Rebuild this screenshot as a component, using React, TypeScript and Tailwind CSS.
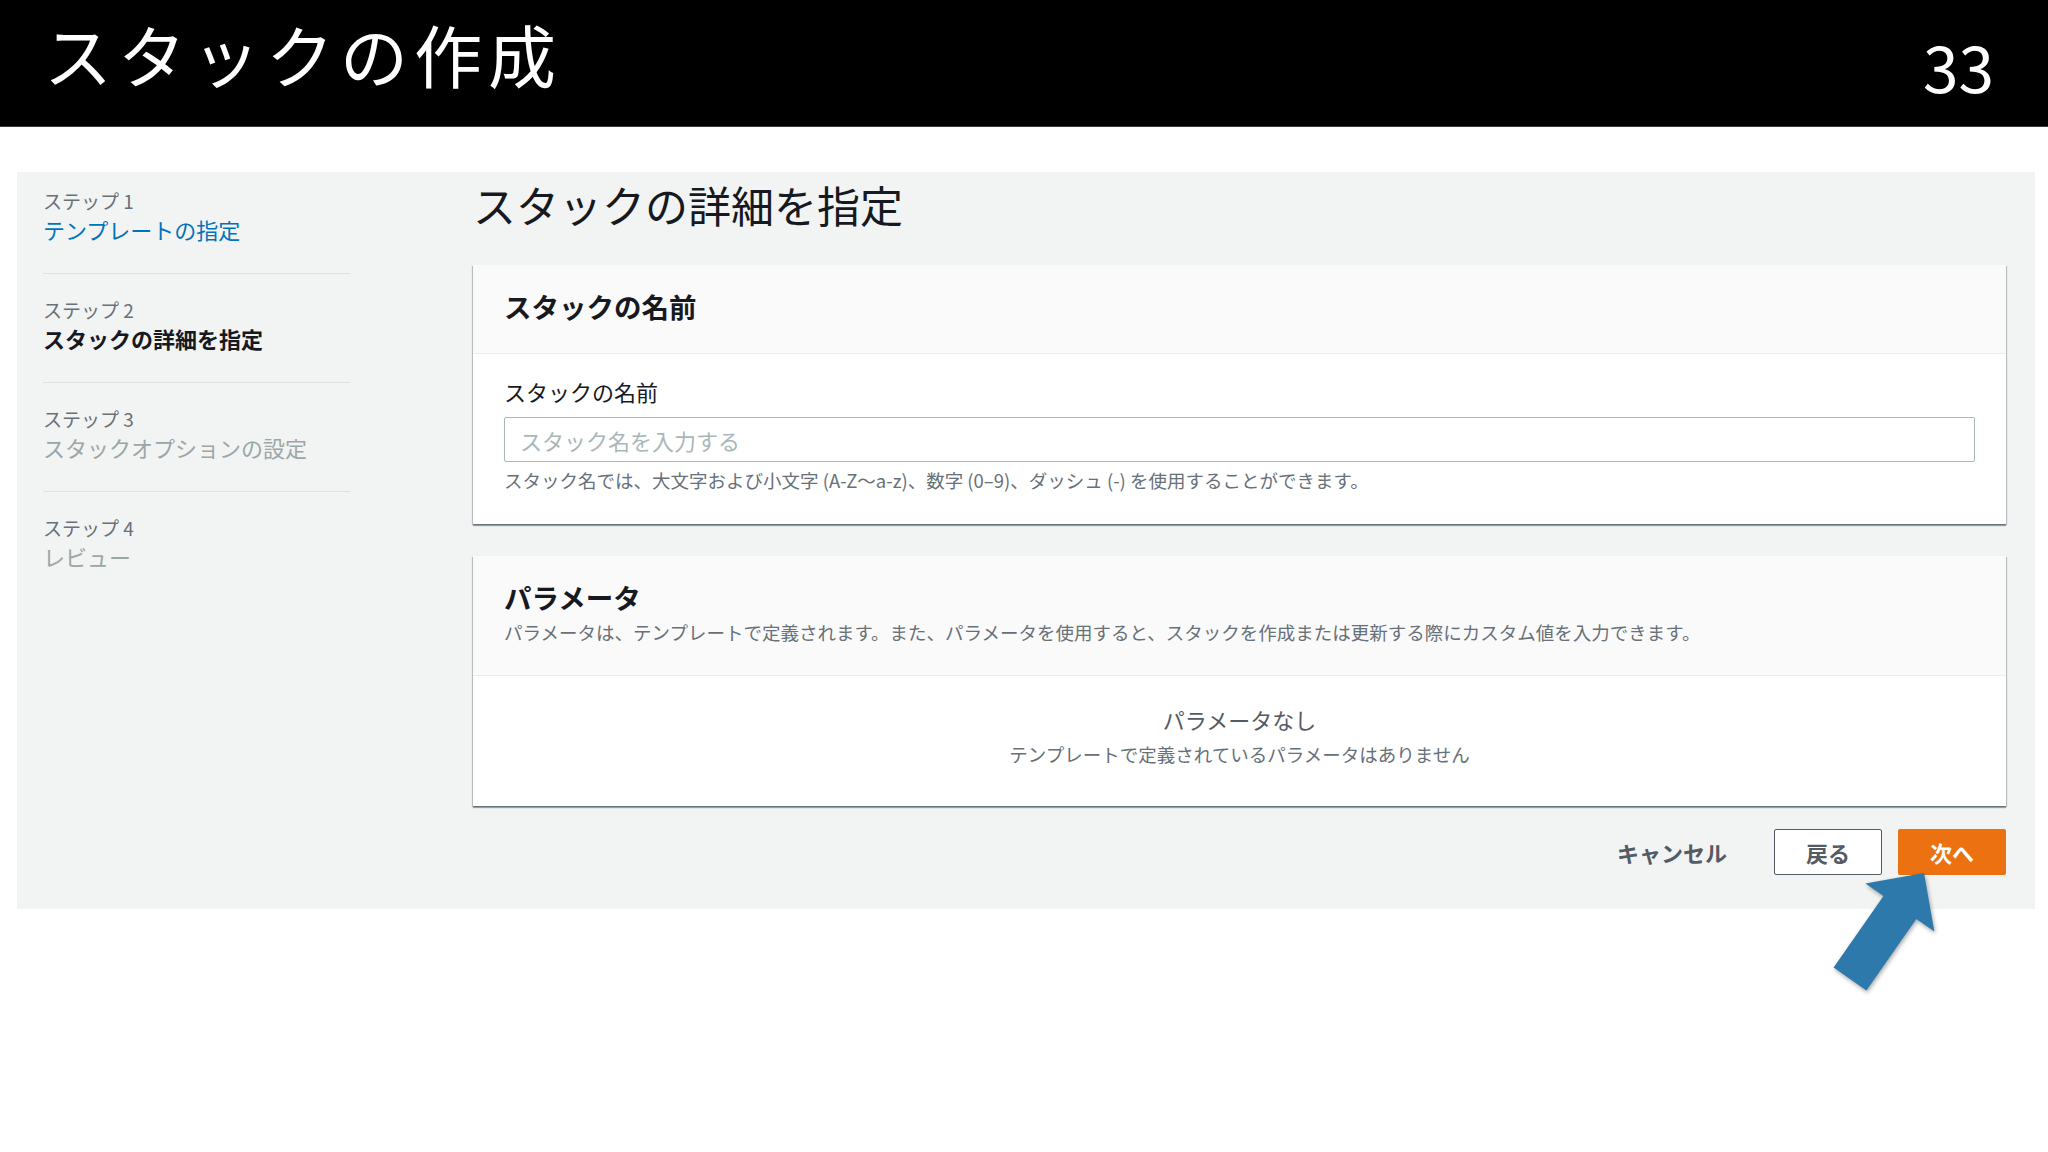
import React from 'react'

const steps = [
  { label: 'ステップ 1', title: 'テンプレートの指定', state: 'done' },
  { label: 'ステップ 2', title: 'スタックの詳細を指定', state: 'current' },
  { label: 'ステップ 3', title: 'スタックオプションの設定', state: 'todo' },
  { label: 'ステップ 4', title: 'レビュー', state: 'todo' },
] as const

const cardShadow =
  'shadow-[0_2px_1px_0_rgba(0,28,36,0.35),1px_1px_1px_0_rgba(0,28,36,0.2),-1px_1px_1px_0_rgba(0,28,36,0.2)]'

export default function App() {
  return (
    <div className="relative h-[1152px] w-[2048px] overflow-hidden bg-white font-['Noto_Sans_CJK_JP',sans-serif]">
      {/* スライドのタイトルバー */}
      <header className="flex h-[127px] items-start justify-between border-b border-[#3c3c3c] bg-black">
        <h1 className="pl-[44px] pt-[18px] text-[68px] leading-[72px] font-normal tracking-[6px] text-white">
          スタックの作成
        </h1>
        <span className="pr-[54px] pt-[32px] text-[64px] leading-[66px] text-white">33</span>
      </header>

      {/* コンソール画面 */}
      <div className="ml-[17px] mt-[45px] flex w-[2018px] bg-[#f2f3f3] pb-[34px]">
        {/* ステップナビ */}
        <nav className="ml-[26px] w-[307px] pt-[16px]">
          {steps.map((s, i) => (
            <div
              key={s.label}
              className={
                i < steps.length - 1
                  ? 'border-b border-[#dfe2e2] pb-[29px] pt-[23px] first:pt-0'
                  : 'pt-[23px]'
              }
            >
              <div className="text-[19px] leading-[26px] text-[#687078]">{s.label}</div>
              <div
                className={
                  s.state === 'done'
                    ? 'text-[22px] leading-[30px] text-[#0073bb]'
                    : s.state === 'current'
                      ? 'text-[22px] leading-[30px] font-bold text-[#16191f]'
                      : 'text-[22px] leading-[30px] text-[#9ba6a7]'
                }
              >
                {s.title}
              </div>
            </div>
          ))}
        </nav>

        {/* メイン */}
        <main className="ml-[123px] w-[1533px] pt-[4px]">
          <h2 className="text-[43px] leading-[56px] font-normal text-[#16191f]">スタックの詳細を指定</h2>

          {/* スタックの名前 */}
          <section className={`mt-[33px] bg-white ${cardShadow}`}>
            <div className="border-b border-[#eaeded] bg-[#fafafa] px-[31px] pb-[29px] pt-[23px]">
              <h3 className="text-[27.5px] leading-[36px] font-bold text-[#16191f]">スタックの名前</h3>
            </div>
            <div className="px-[31px] pb-[32px] pt-[22px]">
              <label className="block text-[22px] leading-[30px] text-[#16191f]">スタックの名前</label>
              <input
                className="mt-[11px] block h-[45px] w-full rounded-[2px] border border-[#aab7b8] bg-white px-[15px] text-[22px] text-[#16191f] outline-none placeholder:text-[#aab7b8]"
                placeholder="スタック名を入力する"
              />
              <p className="mt-[6px] text-[18.5px] leading-[24px] text-[#687078]">
                スタック名では、大文字および小文字 (A-Z～a-z)、数字 (0–9)、ダッシュ (-) を使用することができます。
              </p>
            </div>
          </section>

          {/* パラメータ */}
          <section className={`mt-[32px] bg-white ${cardShadow}`}>
            <div className="border-b border-[#eaeded] bg-[#fafafa] px-[31px] pb-[29px] pt-[23px]">
              <h3 className="text-[27.5px] leading-[36px] font-bold text-[#16191f]">パラメータ</h3>
              <p className="mt-[3px] text-[18.5px] leading-[28px] text-[#687078]">
                パラメータは、テンプレートで定義されます。また、パラメータを使用すると、スタックを作成または更新する際にカスタム値を入力できます。
              </p>
            </div>
            <div className="pb-[39px] pt-[27px] text-center">
              <div className="text-[22px] leading-[32px] text-[#545b64]">パラメータなし</div>
              <div className="mt-[6px] text-[18.5px] leading-[26px] text-[#687078]">
                テンプレートで定義されているパラメータはありません
              </div>
            </div>
          </section>

          {/* ボタン */}
          <div className="mt-[23px] flex justify-end gap-4">
            <button className="h-[46px] px-[31px] text-[22px] font-bold text-[#545b64]">キャンセル</button>
            <button className="h-[46px] w-[108px] rounded-[2px] border border-[#545b64] bg-white text-[22px] font-bold text-[#545b64]">
              戻る
            </button>
            <button className="h-[46px] w-[108px] rounded-[2px] bg-[#ec7211] text-[22px] font-bold text-white">
              次へ
            </button>
          </div>
        </main>
      </div>

      {/* 注釈の矢印 */}
      <svg
        className="absolute left-[1820px] top-[860px] drop-shadow-[1px_2px_2px_rgba(0,0,0,0.35)]"
        width="130"
        height="140"
        viewBox="0 0 130 140"
      >
        <polygon
          points="104,13 114.4,71.6 96.3,59 46.4,130.5 13.6,107.5 63.5,36 45.4,23.4"
          fill="#2e79ab"
        />
      </svg>
    </div>
  )
}
